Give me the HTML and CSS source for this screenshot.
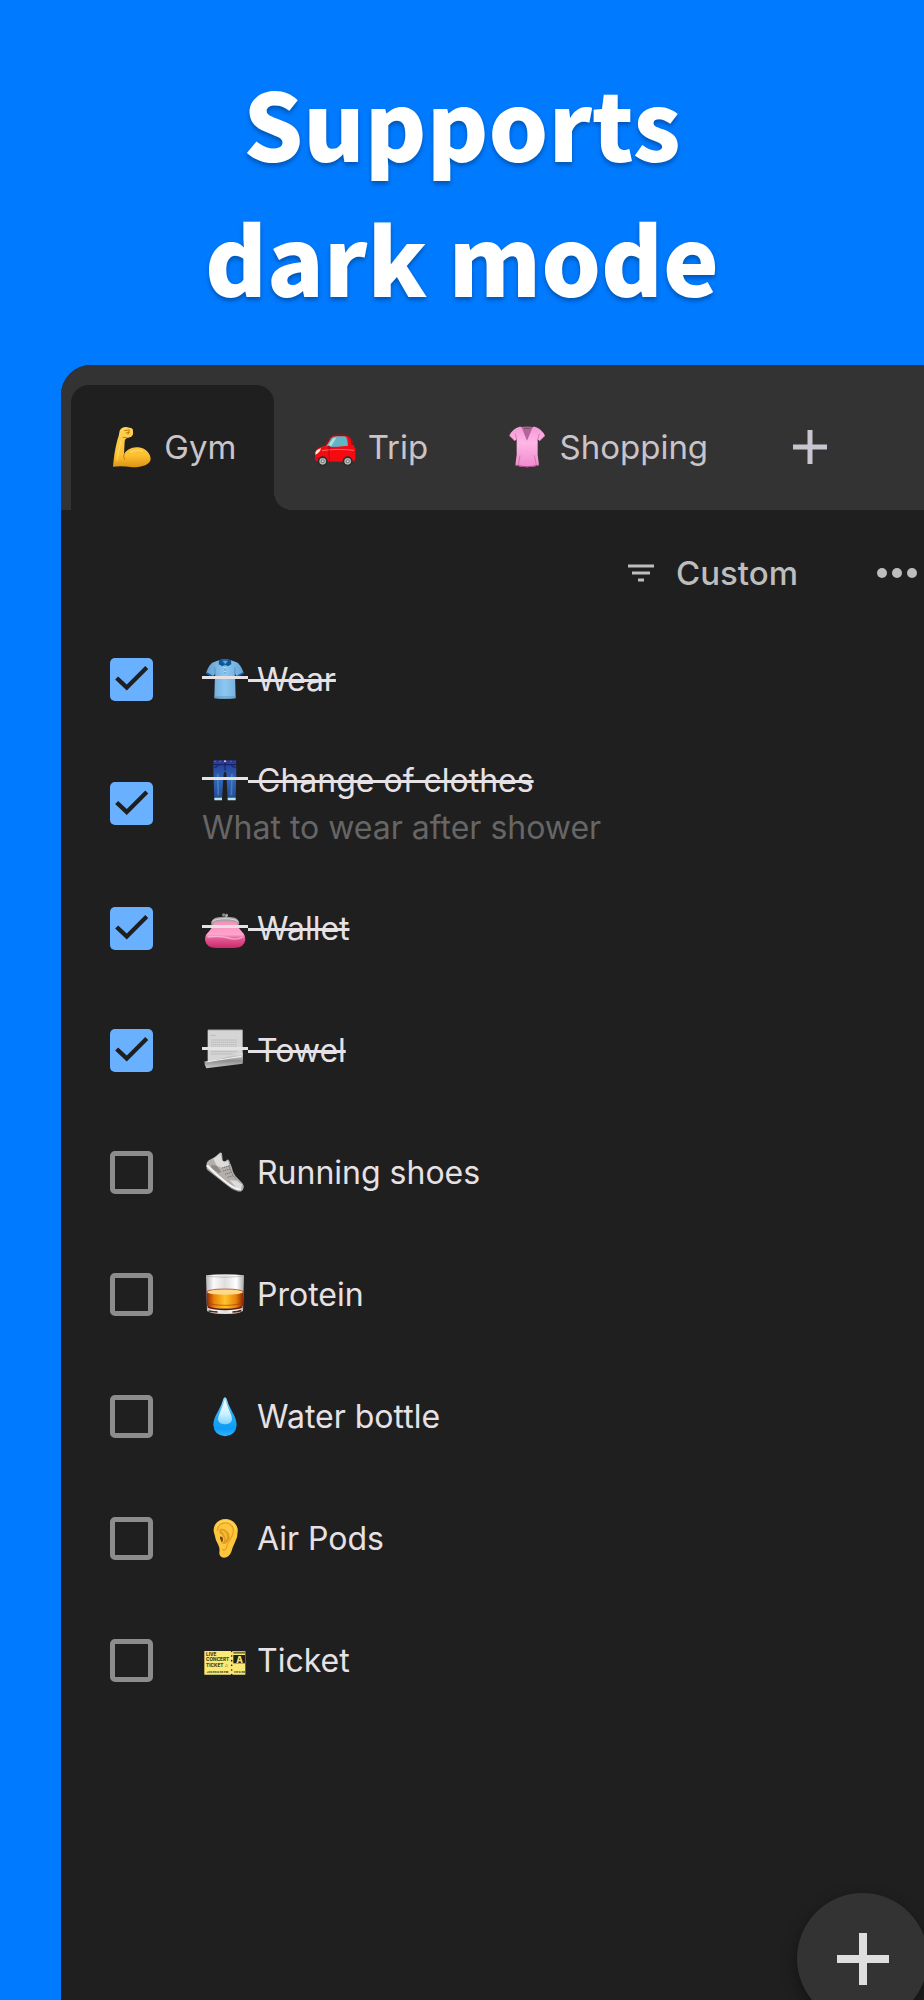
FILE: index.html
```html
<!DOCTYPE html>
<html lang="en">
<head>
    <meta charset="UTF-8">
    <meta name="viewport" content="width=device-width, initial-scale=1.0">
    <title>Checklist - Dark mode</title>
    <link rel="stylesheet" href="styles.css">
</head>
<body>

    <h1>Supports<br>dark mode</h1>

    <main class="phone">
        <nav class="tabs">
            <button class="tab active">
                <svg class="emoji" viewBox="0 0 138 138">
                    <defs>
                        <linearGradient id="skin" x1="0" y1="0" x2="0" y2="1">
                            <stop offset="0" stop-color="#ffd45a"/>
                            <stop offset=".7" stop-color="#fdc02f"/>
                            <stop offset="1" stop-color="#dc9312"/>
                        </linearGradient>
                    </defs>
                    <path fill="url(#skin)" d="M12 128 C15 96 20 62 29 36 L32 20 Q38 8 52 9 L68 13 Q73 16 72 22 Q74 33 67 38 L53 43 Q48 44 47 52 L45 91 C52 77 69 68 88 70 C110 72 124 88 125 105 C124 121 101 130 71 130 Q38 125 12 128 Z"/>
                    <path fill="none" stroke="#c37c12" stroke-width="3" stroke-linecap="round" d="M45 91 Q42 98 47 106 M47 20 L59 18 M51 27 L61 25 M61 18 L57 31 M42 40 L54 41"/>
                    <path fill="none" stroke="#ffe07a" stroke-width="4" stroke-linecap="round" opacity=".7" d="M24 108 Q28 78 36 52 M65 85 Q80 75 100 82"/>
                </svg><span> Gym</span>
            </button>
            <button class="tab">
                <svg class="emoji" viewBox="0 0 138 138">
                    <circle cx="32" cy="112" r="16" fill="#303234"/>
                    <circle cx="107" cy="112" r="16" fill="#303234"/>
                    <path fill="#f50a12" d="M9 85 Q12 71 37 66 L53 42 Q58 33 71 32 L99 32 Q115 33 120 47 L126 67 Q132 73 130 83 L130 106 Q128 113 121 114 L15 112 Q7 109 9 98 Z"/>
                    <path fill="#8e1215" d="M37 66 L54 41 Q59 32 71 32 L99 32 Q115 33 120 47 L124 62 L119 64 L116 47 Q112 36 98 36 L70 36 Q62 36 57 42 L43 66 Z"/>
                    <path fill="#62b5c3" d="M43 66 L58 43 Q63 37 75 37 L98 37 Q104 38 106 47 L108 65 L77 68 L45 69 Z"/>
                    <path fill="#a7dfe3" d="M49 64 L63 43 L73 41 L58 66 Z"/>
                    <path fill="#fff3df" d="M10 86 Q14 76 27 73 Q25 84 11 92 Z"/>
                    <path fill="none" stroke="#ff6b66" stroke-width="3" d="M30 80 Q72 73 126 79"/>
                    <path fill="none" stroke="#a8000a" stroke-width="2" d="M52 70 Q48 90 53 111 M11 102 H20"/>
                    <path fill="#c60611" d="M45 66 Q56 62 57 73 L48 75 Z"/>
                    <circle cx="32" cy="112" r="15" fill="#292b2c"/>
                    <circle cx="32" cy="112" r="10" fill="#b8b8b8"/>
                    <circle cx="32" cy="112" r="6" fill="#747678"/>
                    <circle cx="32" cy="112" r="3" fill="#ddd"/>
                    <circle cx="107" cy="112" r="15" fill="#292b2c"/>
                    <circle cx="107" cy="112" r="10" fill="#b8b8b8"/>
                    <circle cx="107" cy="112" r="6" fill="#747678"/>
                    <circle cx="107" cy="112" r="3" fill="#ddd"/>
                </svg><span> Trip</span>
            </button>
            <button class="tab">
                <svg class="emoji" viewBox="0 0 138 138">
                    <defs>
                        <linearGradient id="pink" x1="0" y1="0" x2="0" y2="1">
                            <stop offset="0" stop-color="#f39bd5"/>
                            <stop offset=".4" stop-color="#ffb5e6"/>
                            <stop offset="1" stop-color="#ef8bcd"/>
                        </linearGradient>
                    </defs>
                    <path fill="#b2659b" d="M48 10 Q69 5 91 10 L79 55 L61 55 Z"/>
                    <path fill="url(#pink)" d="M47 8 Q51 7 54 13 L69 50 L85 13 Q88 7 92 8 Q113 14 123 35 L107 51 L101 46 L101 92 L105 124 Q87 130 69 130 Q51 130 34 124 L38 92 L38 46 L32 51 L16 35 Q25 14 47 8 Z"/>
                    <path fill="none" stroke="#c260a2" stroke-width="2" d="M34 29 L38 48 M106 29 L101 48 M48 94 L43 124 M91 94 L97 124 M16 35 L32 50 M123 35 L107 50"/>
                    <path fill="none" stroke="#86476f" stroke-width="3" d="M60 13 H79"/>
                    <path fill="none" stroke="#aa4d85" stroke-width="3" d="M34 123 Q69 133 105 123"/>
                </svg><span> Shopping</span>
            </button>
            <button class="add-tab" aria-label="Add list">
                <svg viewBox="0 0 36 36"><path d="M18 1 V35 M1 18 H35" stroke="currentColor" stroke-width="5"/></svg>
            </button>
        </nav>

        <div class="toolbar">
            <button class="sort">
                <svg viewBox="0 0 26 18"><path d="M0 2 H26 M4 9 H22 M10 16 H16" stroke="currentColor" stroke-width="3"/></svg>
                Custom
            </button>
            <button class="more" aria-label="More">
                <svg viewBox="0 0 42 12">
                    <circle cx="6" cy="6" r="5" fill="currentColor"/>
                    <circle cx="21" cy="6" r="5" fill="currentColor"/>
                    <circle cx="36" cy="6" r="5" fill="currentColor"/>
                </svg>
            </button>
        </div>

        <ul class="list">
            <li>
                <label class="item">
                    <input type="checkbox" checked>
                    <span class="title">
                        <span class="icon"><svg class="emoji" viewBox="0 0 138 138">
                            <defs>
                                <linearGradient id="blue" x1="0" y1="0" x2="1" y2="0">
                                    <stop offset="0" stop-color="#609ecf"/>
                                    <stop offset=".5" stop-color="#8dc7f1"/>
                                    <stop offset="1" stop-color="#65a4d5"/>
                                </linearGradient>
                            </defs>
                            <path fill="url(#blue)" d="M51 13 Q69 7 87 13 L104 19 Q115 24 125 51 L106 62 L99 54 L101 127 Q69 130 37 127 L39 54 L31 62 L12 51 Q22 24 34 19 Z"/>
                            <path fill="#0d5799" d="M51 13 Q69 7 87 13 L88 25 L78 31 L69 26 L61 31 L50 25 Z"/>
                            <path fill="#62a5d8" d="M61 15 Q69 12 78 15 L70 25 Z"/>
                            <path fill="none" stroke="#1a58a0" stroke-width="5" d="M13 51 L31 61 M124 51 L107 61"/>
                            <path fill="none" stroke="#477fb5" stroke-width="2" d="M69 26 V53 M38 34 L40 59 M99 34 L98 59 M38 123 H100"/>
                            <circle cx="69" cy="35" r="2" fill="#fff"/>
                            <circle cx="69" cy="46" r="2" fill="#fff"/>
                        </svg></span><span class="text"> Wear</span>
                    </span>
                </label>
            </li>
            <li>
                <label class="item tall">
                    <input type="checkbox" checked>
                    <span>
                        <span class="title">
                            <span class="icon"><svg class="emoji" viewBox="0 0 138 138">
                                <defs>
                                    <linearGradient id="denim" x1="0" y1="0" x2="0" y2="1">
                                        <stop offset="0" stop-color="#263796"/>
                                        <stop offset=".5" stop-color="#2f66b3"/>
                                        <stop offset="1" stop-color="#244d96"/>
                                    </linearGradient>
                                </defs>
                                <path fill="url(#denim)" d="M34 10 H102 L103 40 L101 126 L77 126 L73 49 Q69 40 65 49 L60 126 L37 126 L34 40 Z"/>
                                <path fill="none" stroke="#171c60" stroke-width="3" d="M34 23 H102 M69 13 V40 M37 31 Q47 31 49 24 M101 31 Q90 31 88 24"/>
                                <path fill="none" stroke="#5a91d5" stroke-width="5" opacity=".6" d="M47 50 L49 115 M90 50 L88 115"/>
                                <path fill="none" stroke="#b6e4ec" stroke-width="7" d="M37 126 H60 M77 126 H101"/>
                                <path fill="none" stroke="#b77843" stroke-width="3" stroke-dasharray="4 12" d="M37 13 H102"/>
                                <circle cx="69" cy="13" r="3" fill="#e6d7bd"/>
                            </svg></span><span class="text"> Change of clothes</span>
                        </span>
                        <span class="note">What to wear after shower</span>
                    </span>
                </label>
            </li>
            <li>
                <label class="item">
                    <input type="checkbox" checked>
                    <span class="title">
                        <span class="icon"><svg class="emoji" viewBox="0 0 138 138">
                            <defs>
                                <linearGradient id="purse" x1="0" y1="0" x2="0" y2="1">
                                    <stop offset="0" stop-color="#f78fbd"/>
                                    <stop offset=".5" stop-color="#ffa3cc"/>
                                    <stop offset=".65" stop-color="#e35a94"/>
                                    <stop offset="1" stop-color="#ca2868"/>
                                </linearGradient>
                            </defs>
                            <path fill="#a5a5a5" d="M27 54 Q30 39 50 37 Q69 34 90 37 Q109 39 112 54 L107 66 L31 66 Z"/>
                            <path fill="none" stroke="#d8d8d8" stroke-width="3" d="M31 50 Q36 42 69 41 Q103 42 108 50"/>
                            <path fill="url(#purse)" d="M36 52 Q69 45 104 52 Q106 67 120 80 Q130 89 130 104 Q127 129 96 129 H43 Q12 129 9 104 Q9 89 20 80 Q34 66 36 52 Z"/>
                            <path fill="none" stroke="#ffc3df" stroke-width="4" opacity=".7" d="M17 96 Q55 91 79 99 T122 96"/>
                            <circle cx="65" cy="30" r="5" fill="#888"/>
                            <circle cx="73" cy="31" r="5" fill="#bbb"/>
                            <path stroke="#555" stroke-width="3" d="M64 37 L74 26"/>
                        </svg></span><span class="text"> Wallet</span>
                    </span>
                </label>
            </li>
            <li>
                <label class="item">
                    <input type="checkbox" checked>
                    <span class="title">
                        <span class="icon"><svg class="emoji" viewBox="0 0 138 138">
                            <defs>
                                <linearGradient id="roll" x1="0" y1="0" x2="0" y2="1">
                                    <stop offset="0" stop-color="#ededed"/>
                                    <stop offset=".5" stop-color="#8f8f8f"/>
                                    <stop offset="1" stop-color="#c9c9c9"/>
                                </linearGradient>
                            </defs>
                            <path fill="#d5d5d5" d="M17 9 H122 V106 L17 108 Z"/>
                            <path fill="none" stroke="#aaa" stroke-width="2" stroke-dasharray="5 1" d="M25 25 H42 M27 39 H104 M27 46 H104 M27 53 H104 M27 60 H104 M27 74 H104 M27 81 H93"/>
                            <path fill="url(#roll)" d="M7 102 L17 106 L122 78 V110 L13 124 Q7 116 7 102 Z"/>
                            <path fill="none" stroke="#f3f3f3" stroke-width="3" d="M11 105 L119 88"/>
                            <path fill="none" stroke="#a3a3a3" stroke-width="3" d="M18 9 H121"/>
                        </svg></span><span class="text"> Towel</span>
                    </span>
                </label>
            </li>
            <li>
                <label class="item">
                    <input type="checkbox">
                    <span class="title">
                        <span class="icon"><svg class="emoji" viewBox="0 0 138 138">
                            <path fill="#b2afac" d="M13 48 Q14 36 26 31 Q39 25 50 14 Q55 8 60 13 L62 34 Q67 40 75 32 Q80 30 82 36 L90 56 Q93 74 106 87 L120 101 Q128 110 124 119 Q120 130 106 127 Q91 123 77 110 L15 62 Z"/>
                            <path fill="#dedcda" d="M34 29 Q45 23 55 13 L60 34 Q67 44 77 35 L84 48 L59 56 L44 50 Z M83 94 L104 95 L120 107 L117 119 L104 117 Z"/>
                            <path fill="#8d8986" d="M28 47 L44 50 L58 68 L51 73 L28 57 Z"/>
                            <path fill="none" stroke="#f5f3f2" stroke-width="7" stroke-linejoin="round" d="M15 49 Q42 78 76 104 Q99 121 117 122"/>
                            <path fill="none" stroke="#777370" stroke-width="2" d="M13 58 Q50 87 78 110 Q101 128 117 126"/>
                            <path fill="none" stroke="#777370" stroke-width="3" stroke-dasharray="4 2" d="M82 41 Q82 69 103 91 M60 57 L81 51 M63 66 L84 60 M69 76 L88 70 M77 85 L94 80"/>
                        </svg></span><span class="text"> Running shoes</span>
                    </span>
                </label>
            </li>
            <li>
                <label class="item">
                    <input type="checkbox">
                    <span class="title">
                        <span class="icon"><svg class="emoji" viewBox="0 0 138 138">
                            <defs>
                                <linearGradient id="glass" x1="0" y1="0" x2="1" y2="0">
                                    <stop offset="0" stop-color="#b5b5b5"/>
                                    <stop offset=".2" stop-color="#fafafa"/>
                                    <stop offset=".5" stop-color="#dedede"/>
                                    <stop offset=".8" stop-color="#fff"/>
                                    <stop offset="1" stop-color="#aaa"/>
                                </linearGradient>
                                <linearGradient id="whisky" x1="0" y1="0" x2="1" y2="0">
                                    <stop offset="0" stop-color="#8c2504"/>
                                    <stop offset=".2" stop-color="#e98108"/>
                                    <stop offset=".5" stop-color="#ffc52b"/>
                                    <stop offset=".8" stop-color="#e98108"/>
                                    <stop offset="1" stop-color="#8c2504"/>
                                </linearGradient>
                            </defs>
                            <path fill="url(#glass)" d="M12 13 Q69 7 126 13 L123 120 Q111 129 69 129 Q27 129 15 120 Z"/>
                            <path fill="url(#whisky)" d="M14 60 Q69 48 124 60 L123 105 Q109 114 69 114 Q28 114 15 105 Z"/>
                            <ellipse cx="69" cy="63" rx="54" ry="8" fill="#ffd98a"/>
                            <path fill="none" stroke="#a53b05" stroke-width="2" d="M15 62 Q22 54 69 54 T123 62 M18 96 Q35 103 69 103 T120 96"/>
                            <path fill="none" stroke="#632011" stroke-width="5" d="M17 107 Q34 115 69 115 T121 107 M20 120 Q38 123 47 123 M91 123 Q105 123 118 119"/>
                            <path fill="none" stroke="#aaa" stroke-width="2" d="M14 16 Q69 22 124 16"/>
                        </svg></span><span class="text"> Protein</span>
                    </span>
                </label>
            </li>
            <li>
                <label class="item">
                    <input type="checkbox">
                    <span class="title">
                        <span class="icon"><svg class="emoji" viewBox="0 0 138 138">
                            <defs>
                                <linearGradient id="drop" x1="0" y1="0" x2="0" y2="1">
                                    <stop offset="0" stop-color="#9bdcfb"/>
                                    <stop offset=".4" stop-color="#2aacf8"/>
                                    <stop offset=".8" stop-color="#0d9cf5"/>
                                    <stop offset="1" stop-color="#35b6ff"/>
                                </linearGradient>
                                <linearGradient id="shine" x1="0" y1="0" x2="0" y2="1">
                                    <stop offset="0" stop-color="#fff"/>
                                    <stop offset=".6" stop-color="#c9f0ff"/>
                                    <stop offset="1" stop-color="#7fd2fe"/>
                                </linearGradient>
                            </defs>
                            <path fill="url(#drop)" d="M69 13 Q73 13 76 23 C83 49 104 70 104 96 Q102 127 69 130 Q36 127 34 96 C34 70 55 49 62 23 Q65 13 69 13 Z"/>
                            <path fill="url(#shine)" d="M69 18 Q75 37 84 58 Q96 83 84 90 Q69 98 54 90 Q42 83 54 58 Q63 37 69 18 Z"/>
                        </svg></span><span class="text"> Water bottle</span>
                    </span>
                </label>
            </li>
            <li>
                <label class="item">
                    <input type="checkbox">
                    <span class="title">
                        <span class="icon"><svg class="emoji" viewBox="0 0 138 138">
                            <path fill="#fcc63d" d="M38 60 Q31 44 39 29 Q50 11 74 12 Q100 15 107 41 Q109 62 99 82 Q93 94 88 110 Q82 127 66 128 Q51 126 52 112 Q54 101 49 90 Q40 75 38 60 Z"/>
                            <path fill="none" stroke="#e9a223" stroke-width="4" stroke-linecap="round" d="M47 47 Q46 29 64 24 Q86 21 93 39 Q97 56 85 72 Q76 86 73 99 Q69 108 62 104"/>
                            <path fill="#e09c20" d="M53 42 Q68 39 80 54 Q88 69 76 82 Q69 90 61 86 Q69 77 64 66 Q60 58 53 55 Z"/>
                            <path fill="#f8b935" d="M56 46 Q68 45 74 57 Q78 69 70 77 Q71 64 65 57 Z"/>
                            <path fill="#72440a" d="M54 65 Q62 63 63 72 Q64 80 59 83 Q58 76 54 71 Z"/>
                            <path fill="none" stroke="#ffe47b" stroke-width="3" stroke-linecap="round" d="M43 35 Q53 16 76 18 Q95 23 101 42"/>
                        </svg></span><span class="text"> Air Pods</span>
                    </span>
                </label>
            </li>
            <li>
                <label class="item">
                    <input type="checkbox">
                    <span class="title">
                        <span class="icon"><svg class="emoji" viewBox="0 0 138 138">
                            <path fill="#fae974" d="M7 42 H130 V113 H7 Z"/>
                            <path stroke="#1f1f1f" stroke-width="5" stroke-linecap="round" stroke-dasharray="0 14" d="M89 43 V114"/>
                            <path fill="#222018" d="M94 54 H129 V79 H94 Z"/>
                            <path stroke="#77713f" stroke-width="6" d="M94 47 H129"/>
                            <g class="ticket-text">
                                <text x="12" y="57">LIVE</text>
                                <text x="12" y="73">CONCERT</text>
                                <text x="12" y="89">TICKET ♫</text>
                                <text class="small" x="14" y="107">JAN 00  8:00 PM</text>
                                <text class="small" x="95" y="107">VIP 8:00</text>
                                <text class="seat" x="103" y="78">A</text>
                            </g>
                        </svg></span><span class="text"> Ticket</span>
                    </span>
                </label>
            </li>
        </ul>

        <button class="fab" aria-label="Add item">
            <svg viewBox="0 0 52 52"><path d="M26 0 V52 M0 26 H52" stroke="currentColor" stroke-width="8"/></svg>
        </button>
    </main>

</body>
</html>
```
FILE: styles.css
```css
* {
    box-sizing: border-box;
}

body {
    display: flex;
    flex-direction: column;
    min-height: 100vh;
    margin: 0;
    background-color: #007aff;
    font-family: Inter, "Liberation Sans", sans-serif;
    font-size: 32px;
}

h1 {
    margin: 0;
    padding: 54px 0 41px;
    font-family: "Noto Sans CJK JP", "Noto Sans", sans-serif;
    font-size: 94px;
    font-weight: 900;
    line-height: 135px;
    text-align: center;
    color: white;
    text-shadow: 0 3px 4px rgba(0, 0, 0, 0.3);
}

button {
    padding: 0;
    border: none;
    background: none;
    font: inherit;
    cursor: pointer;
}

svg {
    display: block;
    flex: none;
}

.phone {
    position: relative;
    flex: 1;
    margin-left: 61px;
    background-color: #1f1f1f;
    border-top-left-radius: 30px;
    overflow: hidden;
}

/* Tabs */
.tabs {
    display: flex;
    height: 145px;
    padding: 20px 0 0 10px;
    background-color: #333;
    font-size: 33px;
}

.tab {
    position: relative;
    display: flex;
    align-items: center;
    padding: 0 38px 2px;
    color: #cac4c9;
    white-space: pre;
}

.tab.active {
    background-color: #1f1f1f;
    border-radius: 18px 18px 0 0;
}

/* curved foot of the open tab */
.tab.active::after {
    content: "";
    position: absolute;
    left: 100%;
    bottom: 0;
    width: 18px;
    height: 18px;
    background: radial-gradient(circle at 100% 0, #333 18px, #1f1f1f 18px);
}

.emoji {
    width: 46px;
    height: 46px;
}

.add-tab {
    margin-left: 46px;
    padding-bottom: 2px;
    color: #cac4d0;
}

.add-tab svg {
    width: 36px;
}

/* Toolbar */
.toolbar {
    display: flex;
    justify-content: flex-end;
    align-items: center;
    gap: 78px;
    height: 108px;
    padding: 18px 6px 0 0;
    font-size: 33px;
}

.toolbar button {
    color: #bdbdbd;
}

.sort {
    display: flex;
    align-items: center;
    gap: 22px;
    font-weight: 500;
}

.sort svg {
    width: 26px;
}

.more svg {
    width: 42px;
}

/* List */
.list {
    margin: 0;
    padding: 0;
    list-style: none;
}

.item {
    display: flex;
    align-items: center;
    gap: 49px;
    min-height: 122px;
    padding-left: 49px;
    color: #e6e1e5;
    cursor: pointer;
}

.item.tall {
    min-height: 127px;
}

.item input {
    flex: none;
    appearance: none;
    width: 43px;
    height: 43px;
    margin: 0;
    border: 5px solid #8c8c8c;
    border-radius: 5px;
    cursor: pointer;
}

.item input:checked {
    border: none;
    background-color: #69b0ff;
}

.item input:checked::before {
    content: "";
    display: block;
    height: 100%;
    background-color: #1f1f1f;
    clip-path: polygon(12% 51%, 19% 44%, 39% 63%, 82% 20%, 89% 27%, 39% 77%);
}

.title {
    display: flex;
    align-items: center;
    line-height: 46px;
}

.icon {
    position: relative;
}

.text {
    padding-top: 2px;
    white-space: pre;
}

.note {
    display: block;
    line-height: 48px;
    color: #666;
}

.item input:checked ~ * .text {
    text-decoration: line-through;
    text-decoration-thickness: 3px;
}

.item input:checked ~ * .icon::after {
    content: "";
    position: absolute;
    left: 0;
    right: 0;
    top: 20px;
    height: 3px;
    background-color: #e6e1e5;
}

.ticket-text {
    font-family: Inter, sans-serif;
    font-size: 14px;
    font-weight: 800;
    fill: #4b4624;
}

.ticket-text .small {
    font-size: 8px;
}

.ticket-text .seat {
    font-size: 26px;
    fill: #fae974;
}

/* Floating button */
.fab {
    position: absolute;
    right: -4px;
    bottom: -24px;
    display: flex;
    align-items: center;
    justify-content: center;
    width: 131px;
    height: 131px;
    border-radius: 50%;
    background-color: #333;
    color: #dedede;
    box-shadow: 0 6px 16px rgba(0, 0, 0, 0.4);
}

.fab svg {
    width: 52px;
}
```
